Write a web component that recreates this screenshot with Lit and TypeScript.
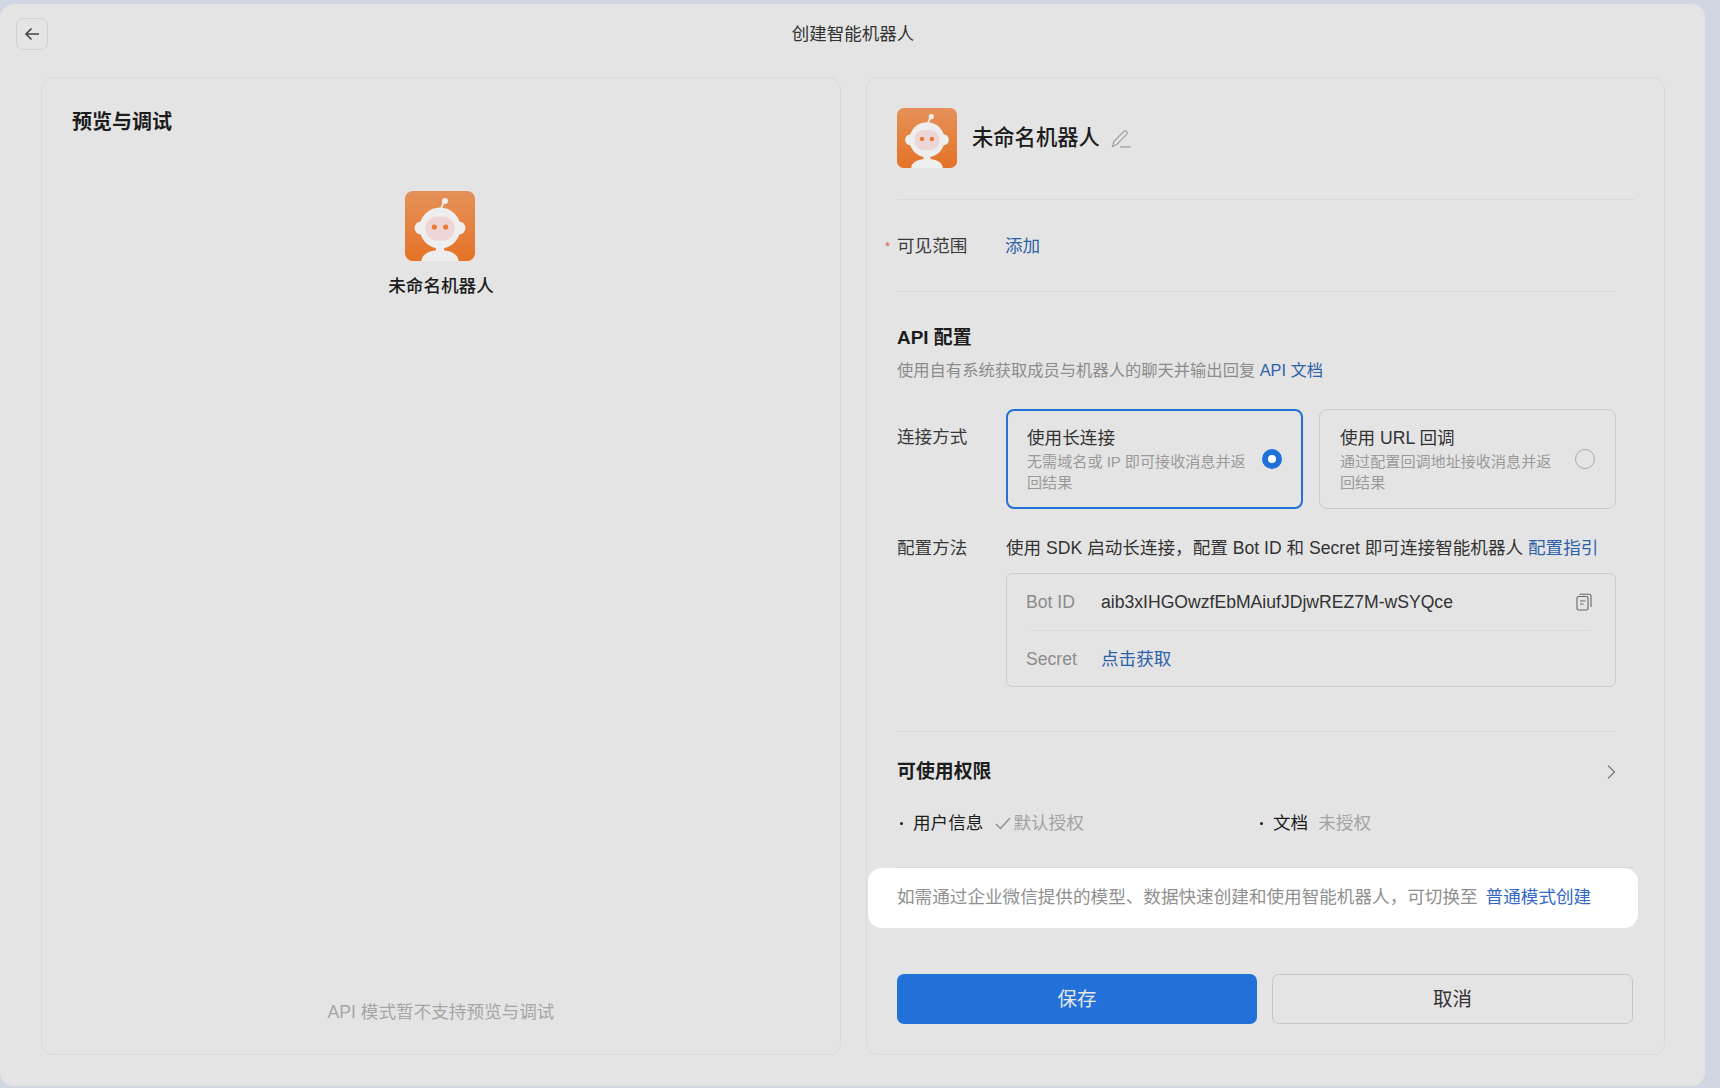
import { LitElement, css, html, svg } from "lit";
import { customElement } from "lit/decorators.js";

const robot = svg`
  <defs>
    <linearGradient id="bot-bg" x1="0" y1="0" x2="0" y2="1">
      <stop offset="0" stop-color="#e59159"></stop>
      <stop offset="1" stop-color="#e57226"></stop>
    </linearGradient>
  </defs>
  <rect width="70" height="70" rx="8" fill="url(#bot-bg)"></rect>
  <path d="M36 20 C36 16 37 14 39 11" fill="none" stroke="#eee" stroke-width="2"></path>
  <circle cx="40" cy="10" r="3" fill="#eee"></circle>
  <circle cx="16" cy="37" r="6.5" fill="#eee"></circle>
  <circle cx="54" cy="37" r="6.5" fill="#eee"></circle>
  <circle cx="35" cy="37" r="20.5" fill="#eee"></circle>
  <rect x="20.5" y="25.5" width="29" height="24" rx="11.5" fill="#eed5d5"></rect>
  <circle cx="29.3" cy="36" r="2.6" fill="#e8782f"></circle>
  <circle cx="40.7" cy="36" r="2.6" fill="#e8782f"></circle>
  <rect x="31" y="55" width="8" height="7" fill="#eee"></rect>
  <path d="M16.5 70 C16.5 63 25 59 35 59 S53.5 63 53.5 70 Z" fill="#eee"></path>
`;

@customElement("app-root")
export class AppRoot extends LitElement {
  static styles = css`
    :host {
      display: block;
      height: 1088px;
      background: #d0d7e2;
      color: #1c1c1c;
      font-family: "Liberation Sans", "Noto Sans CJK SC", sans-serif;
      font-size: 17.6px;
      line-height: 24px;
      overflow: hidden;
    }
    a {
      color: #2f62a8;
      text-decoration: none;
    }
    .window {
      box-sizing: border-box;
      width: 1705px;
      height: 1082px;
      margin-top: 4px;
      background: #e4e4e4;
      border-radius: 14px;
      padding: 14px 40px 0 41px;
      display: flex;
      flex-direction: column;
    }
    .topbar {
      height: 32px;
      margin-left: -25px;
      margin-right: -25px;
      display: flex;
      align-items: center;
      justify-content: center;
      position: relative;
      font-size: 17.5px;
      color: #333;
    }
    .back {
      position: absolute;
      left: 0;
      top: 0;
      box-sizing: border-box;
      width: 32px;
      height: 32px;
      border: 1px solid #d2d2d2;
      border-radius: 7px;
      display: flex;
      align-items: center;
      justify-content: center;
    }
    .panels {
      margin-top: 27px;
      display: grid;
      grid-template-columns: 800px 799px;
      column-gap: 25px;
      height: 978px;
    }
    .panel {
      box-sizing: border-box;
      border: 1px solid #dadada;
      border-radius: 12px;
      height: 978px;
    }
    .preview {
      display: flex;
      flex-direction: column;
      padding: 31px 30px 30px;
    }
    .preview-title {
      font-size: 20px;
      font-weight: 700;
      line-height: 26px;
    }
    .preview-bot {
      margin-top: 56px;
      display: flex;
      flex-direction: column;
      align-items: center;
      font-weight: 500;
      font-size: 17.6px;
    }
    .preview-bot svg {
      width: 70px;
      height: 71px;
      margin: 0 2px 12px 0;
    }
    .preview-note {
      margin-top: auto;
      text-align: center;
      color: #a6a6a6;
      font-size: 17.6px;
    }
    .config {
      padding: 30px 30px 0;
      display: flex;
      flex-direction: column;
    }
    .bot-head {
      display: flex;
      align-items: center;
      padding-bottom: 30px;
      border-bottom: 1px solid #d8d8d8;
    }
    .bot-head svg.avatar {
      width: 60px;
      height: 61px;
    }
    .bot-name {
      margin-left: 15px;
      font-size: 21.3px;
      font-weight: 500;
      line-height: 30px;
      margin-top: -2px;
    }
    .edit {
      margin-left: 11px;
    }
    .form {
      padding-right: 18px;
    }
    .visible {
      display: flex;
      margin: 34px 0 33px;
      position: relative;
      color: #3a3a3a;
    }
    .visible .star {
      position: absolute;
      left: -12px;
      top: 1px;
      color: #e0605a;
      font-size: 13px;
    }
    .visible span.label {
      width: 108px;
    }
    .section {
      border-top: 1px solid #d8d8d8;
    }
    .section-title {
      font-size: 18.9px;
      font-weight: 700;
      line-height: 26px;
    }
    .api .section-title {
      margin-top: 33px;
    }
    .desc {
      margin-top: 7px;
      color: #8c8c8c;
      font-size: 16.3px;
    }
    .row {
      display: grid;
      grid-template-columns: 109px 1fr;
    }
    .row-label {
      color: #3a3a3a;
    }
    .connect {
      margin-top: 27px;
    }
    .connect .row-label {
      padding-top: 16px;
    }
    .cards {
      display: grid;
      grid-template-columns: 297px 297px;
      column-gap: 16px;
    }
    .card {
      box-sizing: border-box;
      height: 100px;
      border: 1px solid #cbcbcb;
      border-radius: 8px;
      padding: 16px 20px 0 20px;
      display: flex;
      align-items: center;
      justify-content: space-between;
    }
    .card.on {
      border: 2px solid #2271d9;
      padding: 15px 19px 0 19px;
    }
    .card-body {
      width: 220px;
      align-self: flex-start;
    }
    .card-title {
      color: #333;
      line-height: 24px;
    }
    .card-sub {
      margin-top: 1px;
      color: #9a9a9a;
      font-size: 15.1px;
      line-height: 21px;
    }
    .radio {
      box-sizing: border-box;
      width: 20px;
      height: 20px;
      margin-top: -16px;
      border: 1.5px solid #a8a8a8;
      border-radius: 50%;
      flex: none;
    }
    .card.on .radio {
      border: 6px solid #2271d9;
      background: #fff;
      margin-top: -16px;
    }
    .method {
      margin-top: 27px;
    }
    .method-text {
      color: #333;
      white-space: nowrap;
    }
    .keys {
      box-sizing: border-box;
      margin-top: 13px;
      height: 114px;
      border: 1px solid #cbcbcb;
      border-radius: 6px;
    }
    .key {
      height: 56px;
      padding: 0 23px 0 19px;
      display: flex;
      align-items: center;
    }
    .key-name {
      width: 75px;
      color: #8c8c8c;
    }
    .key-value {
      flex: 1;
      color: #333;
    }
    .key-line {
      height: 1px;
      margin: 0 25px 0 24px;
      background: #d8d8d8;
    }
    .perms {
      margin-top: 44px;
    }
    .perms-head {
      margin-top: 27px;
      display: flex;
      align-items: center;
      justify-content: space-between;
    }
    .perm-list {
      margin-top: 26px;
      display: grid;
      grid-template-columns: 360px 1fr;
      padding-bottom: 32px;
    }
    .perm {
      display: flex;
      align-items: center;
    }
    .perm .dot {
      width: 3px;
      height: 3px;
      margin: 0 10px 0 3px;
      border-radius: 50%;
      background: #1c1c1c;
    }
    .perm .muted {
      color: #a3a3a3;
    }
    .perm .tick {
      margin: 0 2px 0 12px;
    }
    .perm .plain {
      margin-left: 10px;
    }
    .end-line {
      height: 1px;
      background: #d8d8d8;
    }
    .banner {
      margin: 0 -4px 0 -29px;
      height: 60px;
      box-sizing: border-box;
      padding: 0 0 2px 29px;
      display: flex;
      align-items: center;
      gap: 8px;
      background: #fff;
      border-radius: 14px;
      color: #8f8f8f;
      font-size: 17.6px;
    }
    .banner a {
      color: #3367c6;
    }
    .actions {
      margin-top: 46px;
      display: grid;
      grid-template-columns: 360px 361px;
      column-gap: 15px;
    }
    .btn {
      box-sizing: border-box;
      height: 50px;
      border-radius: 7px;
      display: flex;
      align-items: center;
      justify-content: center;
      font-size: 19.5px;
    }
    .btn.primary {
      background: #2271d9;
      color: #e8e8e8;
    }
    .btn.ghost {
      border: 1px solid #c6c6c6;
      color: #333;
    }
  `;

  render() {
    return html`
      <div class="window">
        <div class="topbar">
          <div class="back">
            <svg width="18" height="18" viewBox="0 0 18 18" fill="none" stroke="#444" stroke-width="1.6">
              <path d="M16 9H3M8.5 3.5 3 9l5.5 5.5"></path>
            </svg>
          </div>
          创建智能机器人
        </div>
        <div class="panels">
          <section class="panel preview">
            <div class="preview-title">预览与调试</div>
            <div class="preview-bot">
              <svg viewBox="0 0 70 71">${robot}</svg>
              未命名机器人
            </div>
            <div class="preview-note">API 模式暂不支持预览与调试</div>
          </section>

          <section class="panel config">
            <div class="bot-head">
              <svg class="avatar" viewBox="0 0 70 71">${robot}</svg>
              <div class="bot-name">未命名机器人</div>
              <svg class="edit" width="20" height="18" viewBox="0 0 20 18" fill="none" stroke="#a0a0a0" stroke-width="1.2">
                <path d="M1.5 16.5 2.8 11.5 12.6 1.6a2 2 0 0 1 2.9 2.8L5.8 14.5 1.5 16.5ZM9 16.8H19.5"></path>
              </svg>
            </div>

            <div class="form">
              <div class="visible">
                <span class="star">*</span>
                <span class="label">可见范围</span>
                <a>添加</a>
              </div>

              <div class="section api">
                <div class="section-title">API 配置</div>
                <div class="desc">使用自有系统获取成员与机器人的聊天并输出回复 <a>API 文档</a></div>

                <div class="row connect">
                  <div class="row-label">连接方式</div>
                  <div class="cards">
                    <div class="card on">
                      <div class="card-body">
                        <div class="card-title">使用长连接</div>
                        <div class="card-sub">无需域名或 IP 即可接收消息并返回结果</div>
                      </div>
                      <div class="radio"></div>
                    </div>
                    <div class="card">
                      <div class="card-body">
                        <div class="card-title">使用 URL 回调</div>
                        <div class="card-sub">通过配置回调地址接收消息并返回结果</div>
                      </div>
                      <div class="radio"></div>
                    </div>
                  </div>
                </div>

                <div class="row method">
                  <div class="row-label">配置方法</div>
                  <div>
                    <div class="method-text">使用 SDK 启动长连接，配置 Bot ID 和 Secret 即可连接智能机器人 <a>配置指引</a></div>
                    <div class="keys">
                      <div class="key">
                        <span class="key-name">Bot ID</span>
                        <span class="key-value">aib3xIHGOwzfEbMAiufJDjwREZ7M-wSYQce</span>
                        <svg width="16" height="18" viewBox="0 0 16 18" fill="none" stroke="#666" stroke-width="1.1">
                          <rect x="1" y="3.5" width="11" height="13.5" rx="1.5"></rect>
                          <path d="M3.5 1.2H13a2 2 0 0 1 2 2V14M4 8h5.5M4 11h3.5"></path>
                        </svg>
                      </div>
                      <div class="key-line"></div>
                      <div class="key">
                        <span class="key-name">Secret</span>
                        <a>点击获取</a>
                      </div>
                    </div>
                  </div>
                </div>
              </div>

              <div class="section perms">
                <div class="perms-head">
                  <div class="section-title">可使用权限</div>
                  <svg width="10" height="16" viewBox="0 0 10 16" fill="none" stroke="#777" stroke-width="1.3">
                    <path d="M2 1.5 8.5 8 2 14.5"></path>
                  </svg>
                </div>
                <div class="perm-list">
                  <div class="perm">
                    <span class="dot"></span>用户信息
                    <svg class="tick" width="16" height="14" viewBox="0 0 16 14" fill="none" stroke="#8c8c8c" stroke-width="1.3">
                      <path d="M1 8 5.5 12.5 15 2"></path>
                    </svg>
                    <span class="muted">默认授权</span>
                  </div>
                  <div class="perm">
                    <span class="dot"></span>文档
                    <span class="muted plain">未授权</span>
                  </div>
                </div>
              </div>
            </div>

            <div class="end-line"></div>
            <div class="banner">
              如需通过企业微信提供的模型、数据快速创建和使用智能机器人，可切换至
              <a>普通模式创建</a>
            </div>

            <div class="actions">
              <div class="btn primary">保存</div>
              <div class="btn ghost">取消</div>
            </div>
          </section>
        </div>
      </div>
    `;
  }
}
